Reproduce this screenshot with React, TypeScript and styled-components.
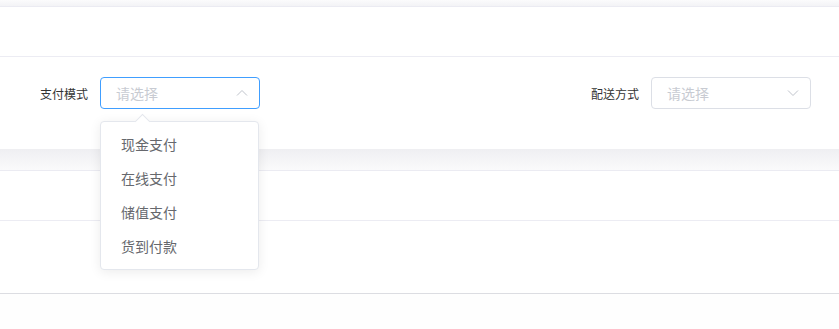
import React from 'react';
import styled, { createGlobalStyle } from 'styled-components';

const GlobalStyle = createGlobalStyle`
  html, body {
    margin: 0;
    padding: 0;
    background: #fefefe;
    font-family: "Noto Sans CJK SC", "Noto Sans", sans-serif;
  }
`;

const Page = styled.div`
  width: 839px;
  height: 329px;
  overflow: hidden;
  background: #fefefe;
`;

const TopGap = styled.div`
  height: 6px;
  background: linear-gradient(#fbfbfc, #f3f3f6);
  border-bottom: 1px solid #ebebf2;
`;

const Panel = styled.div`
  background: #fff;
`;

const PanelHead = styled.div`
  height: 49px;
  border-bottom: 1px solid #ececf3;
`;

const FormRow = styled.div`
  display: flex;
  justify-content: space-between;
  padding: 20px 28px 40px 0;
`;

const FormItem = styled.div`
  position: relative;
  display: flex;
  align-items: center;
`;

const Label = styled.label`
  width: 100px;
  box-sizing: border-box;
  padding-right: 12px;
  text-align: right;
  font-size: 12px;
  color: #333;
`;

const SelectBox = styled.div<{ $open?: boolean }>`
  width: 160px;
  height: 32px;
  box-sizing: border-box;
  border: 1px solid ${p => (p.$open ? '#409eff' : '#dcdfe6')};
  border-radius: 4px;
  background: #fff;
  display: flex;
  align-items: center;
  justify-content: space-between;
  padding: 0 10px 0 15px;
`;

const Placeholder = styled.span`
  font-size: 14px;
  color: #c8cbd2;
`;

const Gap = styled.div`
  height: 21px;
  background: linear-gradient(#efeff2, #fafafb);
  border-bottom: 1px solid #ebebf2;
`;

const Row = styled.div<{ $h: number; $line: string }>`
  height: ${p => p.$h}px;
  background: #fff;
  border-bottom: 1px solid ${p => p.$line};
`;

const Dropdown = styled.ul`
  position: absolute;
  top: 44px;
  left: 100px;
  width: 159px;
  box-sizing: border-box;
  margin: 0;
  padding: 5px 0 6px;
  list-style: none;
  background: #fff;
  border: 1px solid #e4e7ed;
  border-radius: 4px;
  box-shadow: 0 2px 12px 0 rgba(0, 0, 0, 0.08);
  z-index: 10;

  &::before {
    content: '';
    position: absolute;
    top: -6px;
    left: 36px;
    width: 10px;
    height: 10px;
    background: #fff;
    border-top: 1px solid #e4e7ed;
    border-left: 1px solid #e4e7ed;
    transform: rotate(45deg);
  }
`;

const Option = styled.li`
  position: relative;
  height: 34px;
  line-height: 34px;
  padding: 0 20px;
  font-size: 14px;
  color: #66686d;
`;

const Arrow = ({ up }: { up?: boolean }) => (
  <svg width="14" height="14" viewBox="0 0 14 14" fill="none">
    <path
      d={up ? 'M2 9.5 L7 4.5 L12 9.5' : 'M2 4.5 L7 9.5 L12 4.5'}
      stroke="#c0c4cc"
      strokeWidth="1"
    />
  </svg>
);

const payModes = ['现金支付', '在线支付', '储值支付', '货到付款'];

export default function App() {
  return (
    <Page>
      <GlobalStyle />
      <TopGap />
      <Panel>
        <PanelHead />
        <FormRow>
          <FormItem>
            <Label>支付模式</Label>
            <SelectBox $open>
              <Placeholder>请选择</Placeholder>
              <Arrow up />
            </SelectBox>
            <Dropdown>
              {payModes.map(m => (
                <Option key={m}>{m}</Option>
              ))}
            </Dropdown>
          </FormItem>
          <FormItem>
            <Label>配送方式</Label>
            <SelectBox>
              <Placeholder>请选择</Placeholder>
              <Arrow />
            </SelectBox>
          </FormItem>
        </FormRow>
      </Panel>
      <Gap />
      <Row $h={49} $line="#ececf3" />
      <Row $h={72} $line="#dcdde2" />
    </Page>
  );
}
